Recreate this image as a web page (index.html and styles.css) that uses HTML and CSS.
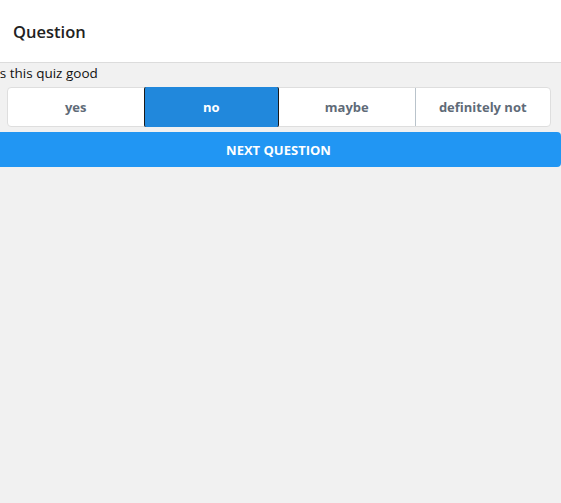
FILE: index.html
```html
<!DOCTYPE html>
<html>
<head>
<meta charset="utf-8">
<link rel="stylesheet" href="styles.css">
</head>
<body>
<header class="topbar"><h1 class="title">Question</h1></header>
<main class="content">
  <div class="label">Is this quiz good</div>
  <div class="choices">
    <button class="choice">yes</button>
    <button class="choice selected">no</button>
    <button class="choice">maybe</button>
    <button class="choice">definitely not</button>
  </div>
  <button class="next">NEXT QUESTION</button>
</main>
</body>
</html>
```
FILE: styles.css
```css
html, body {
  margin: 0;
  padding: 0;
  background: #f1f1f1;
  font-family: "Open Sans", "Noto Sans", sans-serif;
  overflow: hidden;
}
.topbar {
  height: 63px;
  background: #fff;
  border-bottom: 1px solid #dcdcdc;
  display: flex;
  align-items: center;
  padding-left: 13px;
  box-sizing: border-box;
}
.title {
  margin: 0;
  font-size: 16.5px;
  font-weight: 600;
  color: #222;
}
.content {
  margin-left: -4px;
  width: 565px;
}
.label {
  font-size: 13.5px;
  line-height: 20px;
  color: #111;
}
.choices {
  display: grid;
  grid-template-columns: repeat(4, 1fr);
  margin: 4px 10px 0 11px;
  height: 40px;
  background: #fff;
  border: 1px solid #dedede;
  border-radius: 4px;
  box-sizing: border-box;
}
.choice {
  font-family: inherit;
  font-size: 13px;
  font-weight: 700;
  color: #5f6b78;
  background: transparent;
  border: none;
  border-left: 1px solid #b9c3cb;
  padding: 0;
  cursor: pointer;
}
.choice:first-child { border-left: none; }
.choice.selected {
  background: #2188dc;
  color: #fff;
  border-left: 1px solid #1a1a1a;
  border-right: 1px solid #1a1a1a;
  margin-top: -1px;
  margin-bottom: -1px;
  border-radius: 2px;
}
.choice.selected + .choice { border-left: none; }
.next {
  display: block;
  width: 100%;
  height: 35px;
  margin-top: 5px;
  background: #2196f3;
  color: #fff;
  border: none;
  border-radius: 4px;
  font-family: inherit;
  font-size: 13px;
  font-weight: 700;
  cursor: pointer;
}
```
